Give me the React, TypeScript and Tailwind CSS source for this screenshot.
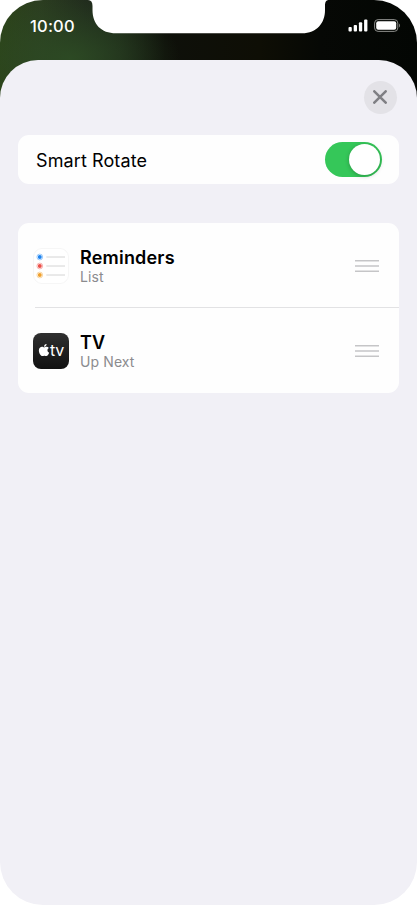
import type { ReactNode } from "react";
import { FaApple } from "react-icons/fa";

type Widget = {
  name: string;
  detail: string;
  icon: ReactNode;
};

const widgets: Widget[] = [
  { name: "Reminders", detail: "List", icon: <RemindersIcon /> },
  { name: "TV", detail: "Up Next", icon: <TvIcon /> }
];

export default function App() {
  return (
    <div className="h-[905px] w-[417px] overflow-hidden bg-white font-['Inter','Liberation_Sans',sans-serif] text-black">
      <div className="relative flex h-full flex-col">
        <div className="absolute inset-x-0 top-0 h-[100px] rounded-t-[43px] bg-[radial-gradient(ellipse_110px_60px_at_70px_58px,rgba(45,76,36,0.9),rgba(45,76,36,0)),linear-gradient(90deg,#2c4319_0px,#2b3d20_40px,#212c1d_85px,#1b2418_120px,#0e100a_165px,#0e0e05_260px,#060805_320px,#030603_417px)]" />
        <Notch />
        <StatusBar />
        <main className="relative flex-1 rounded-t-[38px] rounded-b-[43px] bg-[#f1f0f6] pr-[18px] pl-[18px]">
          <div className="flex justify-end pt-[20.5px] pr-[2.5px]">
            <button
              type="button"
              aria-label="Close"
              className="flex h-[33px] w-[33px] items-center justify-center rounded-full bg-[#e3e2e7]"
            >
              <svg viewBox="0 0 14 14" className="h-[14px] w-[14px]" fill="none">
                <path d="M1.3 1.3 12.7 12.7M12.7 1.3 1.3 12.7" stroke="#7f7f84" strokeWidth="2.5" strokeLinecap="round" />
              </svg>
            </button>
          </div>

          <section className="mt-[21px] flex h-[49px] items-center justify-between rounded-[11px] bg-[#fefefe] pr-[17.5px] pl-[18px]">
            <span className="pt-[2px] text-[18px] tracking-[0.1px]">Smart Rotate</span>
            <Toggle />
          </section>

          <section className="mt-[39.5px] h-[170px] rounded-[11px] bg-[#fefefe]">
            {widgets.map((widget, i) => (
              <div key={widget.name} className="flex h-[85px] flex-col first:h-[84px]">
                {i > 0 ? <div className="ml-[17px] h-px shrink-0 bg-[#e2e2e4]" /> : null}
                <WidgetRow widget={widget} />
              </div>
            ))}
          </section>
        </main>
      </div>
    </div>
  );
}

function Notch() {
  return (
    <svg viewBox="0 0 241 34" className="absolute top-0 left-[88px] h-[34px] w-[241px]">
      <path
        d="M0 0H241C238 0 237 2 237 6V10C237 23 229 33.3 214 33.3H28C13 33.3 4.500 24 4.500 10V6C4.500 2 3 0 0 0Z"
        fill="#fff"
      />
    </svg>
  );
}

function StatusBar() {
  return (
    <header className="relative flex h-[60px] items-start justify-between pt-[16px] pr-[16px] pl-[30px]">
      <span className="text-[16.5px] leading-[20px] font-medium tracking-[0.2px] text-white">10:00</span>
      <div className="flex items-center gap-[6px] pt-[3px]">
        <svg viewBox="0 0 20 13" className="h-[13px] w-[20px]" fill="#fff">
          <rect x="0.500" y="8" width="3.300" height="4.500" rx="1" />
          <rect x="5.700" y="6" width="3.300" height="6.500" rx="1" />
          <rect x="10.900" y="3.300" width="3.300" height="9.200" rx="1" />
          <rect x="16.100" y="0.600" width="3.300" height="11.900" rx="1" />
        </svg>
        <svg viewBox="0 0 27 13" className="h-[13px] w-[27px]" fill="none">
          <rect x="0.600" y="0.600" width="23.200" height="11.800" rx="3.500" stroke="#8b8c89" />
          <rect x="2.200" y="2.200" width="20" height="8.600" rx="2" fill="#fff" />
          <path d="M25 4.500C26.400 5 26.400 8 25 8.500Z" fill="#777876" />
        </svg>
      </div>
    </header>
  );
}

function Toggle() {
  return (
    <button
      type="button"
      role="switch"
      aria-checked="true"
      aria-label="Smart Rotate"
      className="flex h-[35px] w-[57px] items-center justify-end rounded-full bg-[#35c759] pr-[2px]"
    >
      <span className="h-[31px] w-[31px] rounded-full bg-white shadow-[0_1px_4px_rgba(0,0,0,0.25)]" />
    </button>
  );
}

function WidgetRow({ widget }: { widget: Widget }) {
  return (
    <div className="flex flex-1 items-center pt-[2px] pr-[20px] pl-[15px]">
      {widget.icon}
      <div className="ml-[11px] flex flex-1 flex-col pt-px">
        <span className="text-[18px] leading-[20px] font-semibold tracking-[0.2px]">{widget.name}</span>
        <span className="text-[14px] leading-[18px] tracking-[0.1px] text-[#8b8b8e]">{widget.detail}</span>
      </div>
      <svg viewBox="0 0 24 14" className="h-[14px] w-[24px]" stroke="#c5c5c7" strokeWidth="1.4">
        <path d="M0 1.700H24M0 7H24M0 12.300H24" />
      </svg>
    </div>
  );
}

function RemindersIcon() {
  return (
    <svg viewBox="0 0 36 36" className="h-[36px] w-[36px]">
      <rect x="0.500" y="0.500" width="35" height="35" rx="8.500" fill="#fff" stroke="#f6f6f6" />
      {["#1a82f0", "#ec4e48", "#f0a02c"].map((color, i) => (
        <g key={color} transform={`translate(0 ${9 + i * 9})`}>
          <circle cx="6.800" cy="0" r="2" fill={color} />
          <circle cx="6.800" cy="0" r="2.900" fill="none" stroke={color} strokeOpacity="0.5" strokeWidth="0.800" />
          <path d="M13.300 0H32" stroke="#cfcfcf" strokeWidth="0.900" />
        </g>
      ))}
    </svg>
  );
}

function TvIcon() {
  return (
    <div className="flex h-[36px] w-[36px] items-center justify-center rounded-[8px] bg-linear-to-b from-[#303030] to-[#111111] text-white">
      <FaApple className="h-[14px] w-[12px] -translate-y-px" />
      <span className="-translate-y-px text-[16px] leading-none tracking-[-0.3px]">tv</span>
    </div>
  );
}
